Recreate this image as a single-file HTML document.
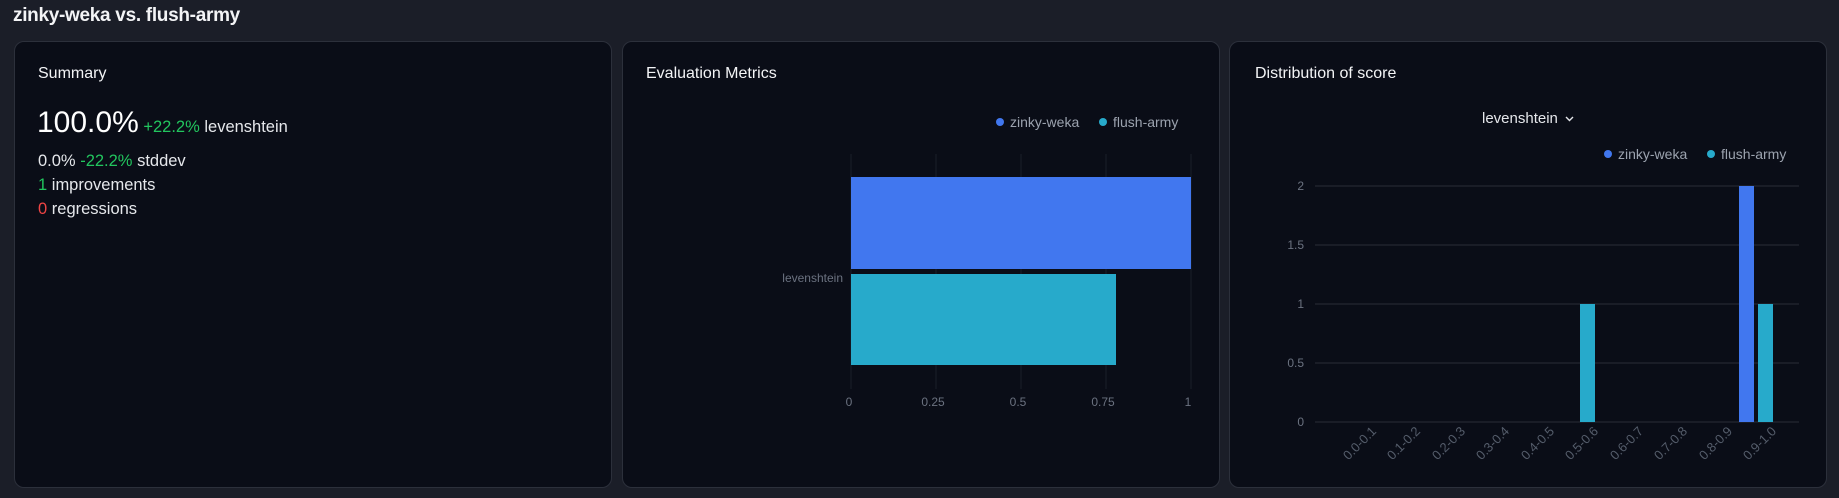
<!DOCTYPE html>
<html><head><meta charset="utf-8"><style>
html,body{margin:0;padding:0;width:1839px;height:498px;overflow:hidden;background:#1b1e28;font-family:"Liberation Sans",sans-serif;}
.title{position:absolute;left:13px;top:5px;font-size:19px;font-weight:bold;color:#f3f4f6;letter-spacing:-0.3px;}
.card{position:absolute;top:41px;height:447px;background:#0a0d17;border:1px solid #2c303b;border-radius:10px;box-sizing:border-box;}
.h{position:absolute;top:65px;font-size:16px;color:#f3f4f6;}
.t{position:absolute;color:#e5e7eb;font-size:16.5px;white-space:nowrap;}
.g{color:#22c55e}.r{color:#ef4444}
svg{position:absolute;left:0;top:0}
</style></head><body>
<div class="title">zinky-weka vs. flush-army</div>
<div class="card" style="left:14px;width:598px"></div>
<div class="card" style="left:622px;width:598px"></div>
<div class="card" style="left:1229px;width:598px"></div>
<div class="h" style="left:38px">Summary</div>
<div class="h" style="left:646px">Evaluation Metrics</div>
<div class="h" style="left:1255px">Distribution of score</div>
<div class="t" style="left:37px;top:106px"><span style="font-size:30px;color:#fff">100.0%</span> <span class="g">+22.2%</span> levenshtein</div>
<div class="t" style="left:38px;top:152px">0.0% <span class="g">-22.2%</span> stddev</div>
<div class="t" style="left:38px;top:176px"><span class="g">1</span> improvements</div>
<div class="t" style="left:38px;top:200px"><span class="r">0</span> regressions</div>
<svg width="1839" height="498" font-family="Liberation Sans, sans-serif">
<g stroke="#1a1e28" stroke-width="1">
<line x1="851" y1="154" x2="851" y2="389"/><line x1="936" y1="154" x2="936" y2="389"/><line x1="1021" y1="154" x2="1021" y2="389"/><line x1="1106" y1="154" x2="1106" y2="389"/><line x1="1191" y1="154" x2="1191" y2="389"/>
</g>
<rect x="851" y="177" width="340" height="92" fill="#4177ef"/>
<rect x="851" y="274" width="265" height="91" fill="#27aacb"/>
<g fill="#6b7280" font-size="12" text-anchor="middle">
<text x="849" y="406">0</text><text x="933" y="406">0.25</text><text x="1018" y="406">0.5</text><text x="1103" y="406">0.75</text><text x="1188" y="406">1</text>
<text x="843" y="282" text-anchor="end">levenshtein</text>
</g>
<g font-size="14" fill="#9ca3af">
<circle cx="1000" cy="122" r="4" fill="#4177ef"/><text x="1010" y="127">zinky-weka</text>
<circle cx="1103" cy="122" r="4" fill="#27aacb"/><text x="1113" y="127">flush-army</text>
<circle cx="1608" cy="154" r="4" fill="#4177ef"/><text x="1618" y="159">zinky-weka</text>
<circle cx="1711" cy="154" r="4" fill="#27aacb"/><text x="1721" y="159">flush-army</text>
</g>
<text x="1482" y="123" font-size="15" fill="#e5e7eb">levenshtein</text>
<path d="M1566 117 l3.5 3.5 l3.5 -3.5" stroke="#e5e7eb" stroke-width="1.4" fill="none"/>
<g stroke="#1f232d" stroke-width="1.5">
<line x1="1315" y1="186" x2="1799" y2="186"/><line x1="1315" y1="245" x2="1799" y2="245"/><line x1="1315" y1="304" x2="1799" y2="304"/><line x1="1315" y1="363" x2="1799" y2="363"/><line x1="1315" y1="422" x2="1799" y2="422"/>
</g>
<g fill="#6b7280" font-size="12" text-anchor="end">
<text x="1304" y="190">2</text><text x="1304" y="249">1.5</text><text x="1304" y="308">1</text><text x="1304" y="367">0.5</text><text x="1304" y="426">0</text>
</g>
<rect x="1580" y="304" width="15" height="118" fill="#27aacb"/>
<rect x="1739" y="186" width="15" height="236" fill="#4177ef"/>
<rect x="1758" y="304" width="15" height="118" fill="#27aacb"/>
<g fill="#555d6b" font-size="13" text-anchor="end">
<text transform="translate(1377,432) rotate(-45)">0.0-0.1</text>
<text transform="translate(1421,432) rotate(-45)">0.1-0.2</text>
<text transform="translate(1466,432) rotate(-45)">0.2-0.3</text>
<text transform="translate(1510,432) rotate(-45)">0.3-0.4</text>
<text transform="translate(1555,432) rotate(-45)">0.4-0.5</text>
<text transform="translate(1599,432) rotate(-45)">0.5-0.6</text>
<text transform="translate(1644,432) rotate(-45)">0.6-0.7</text>
<text transform="translate(1688,432) rotate(-45)">0.7-0.8</text>
<text transform="translate(1733,432) rotate(-45)">0.8-0.9</text>
<text transform="translate(1777,432) rotate(-45)">0.9-1.0</text>
</g>
</svg>
</body></html>
